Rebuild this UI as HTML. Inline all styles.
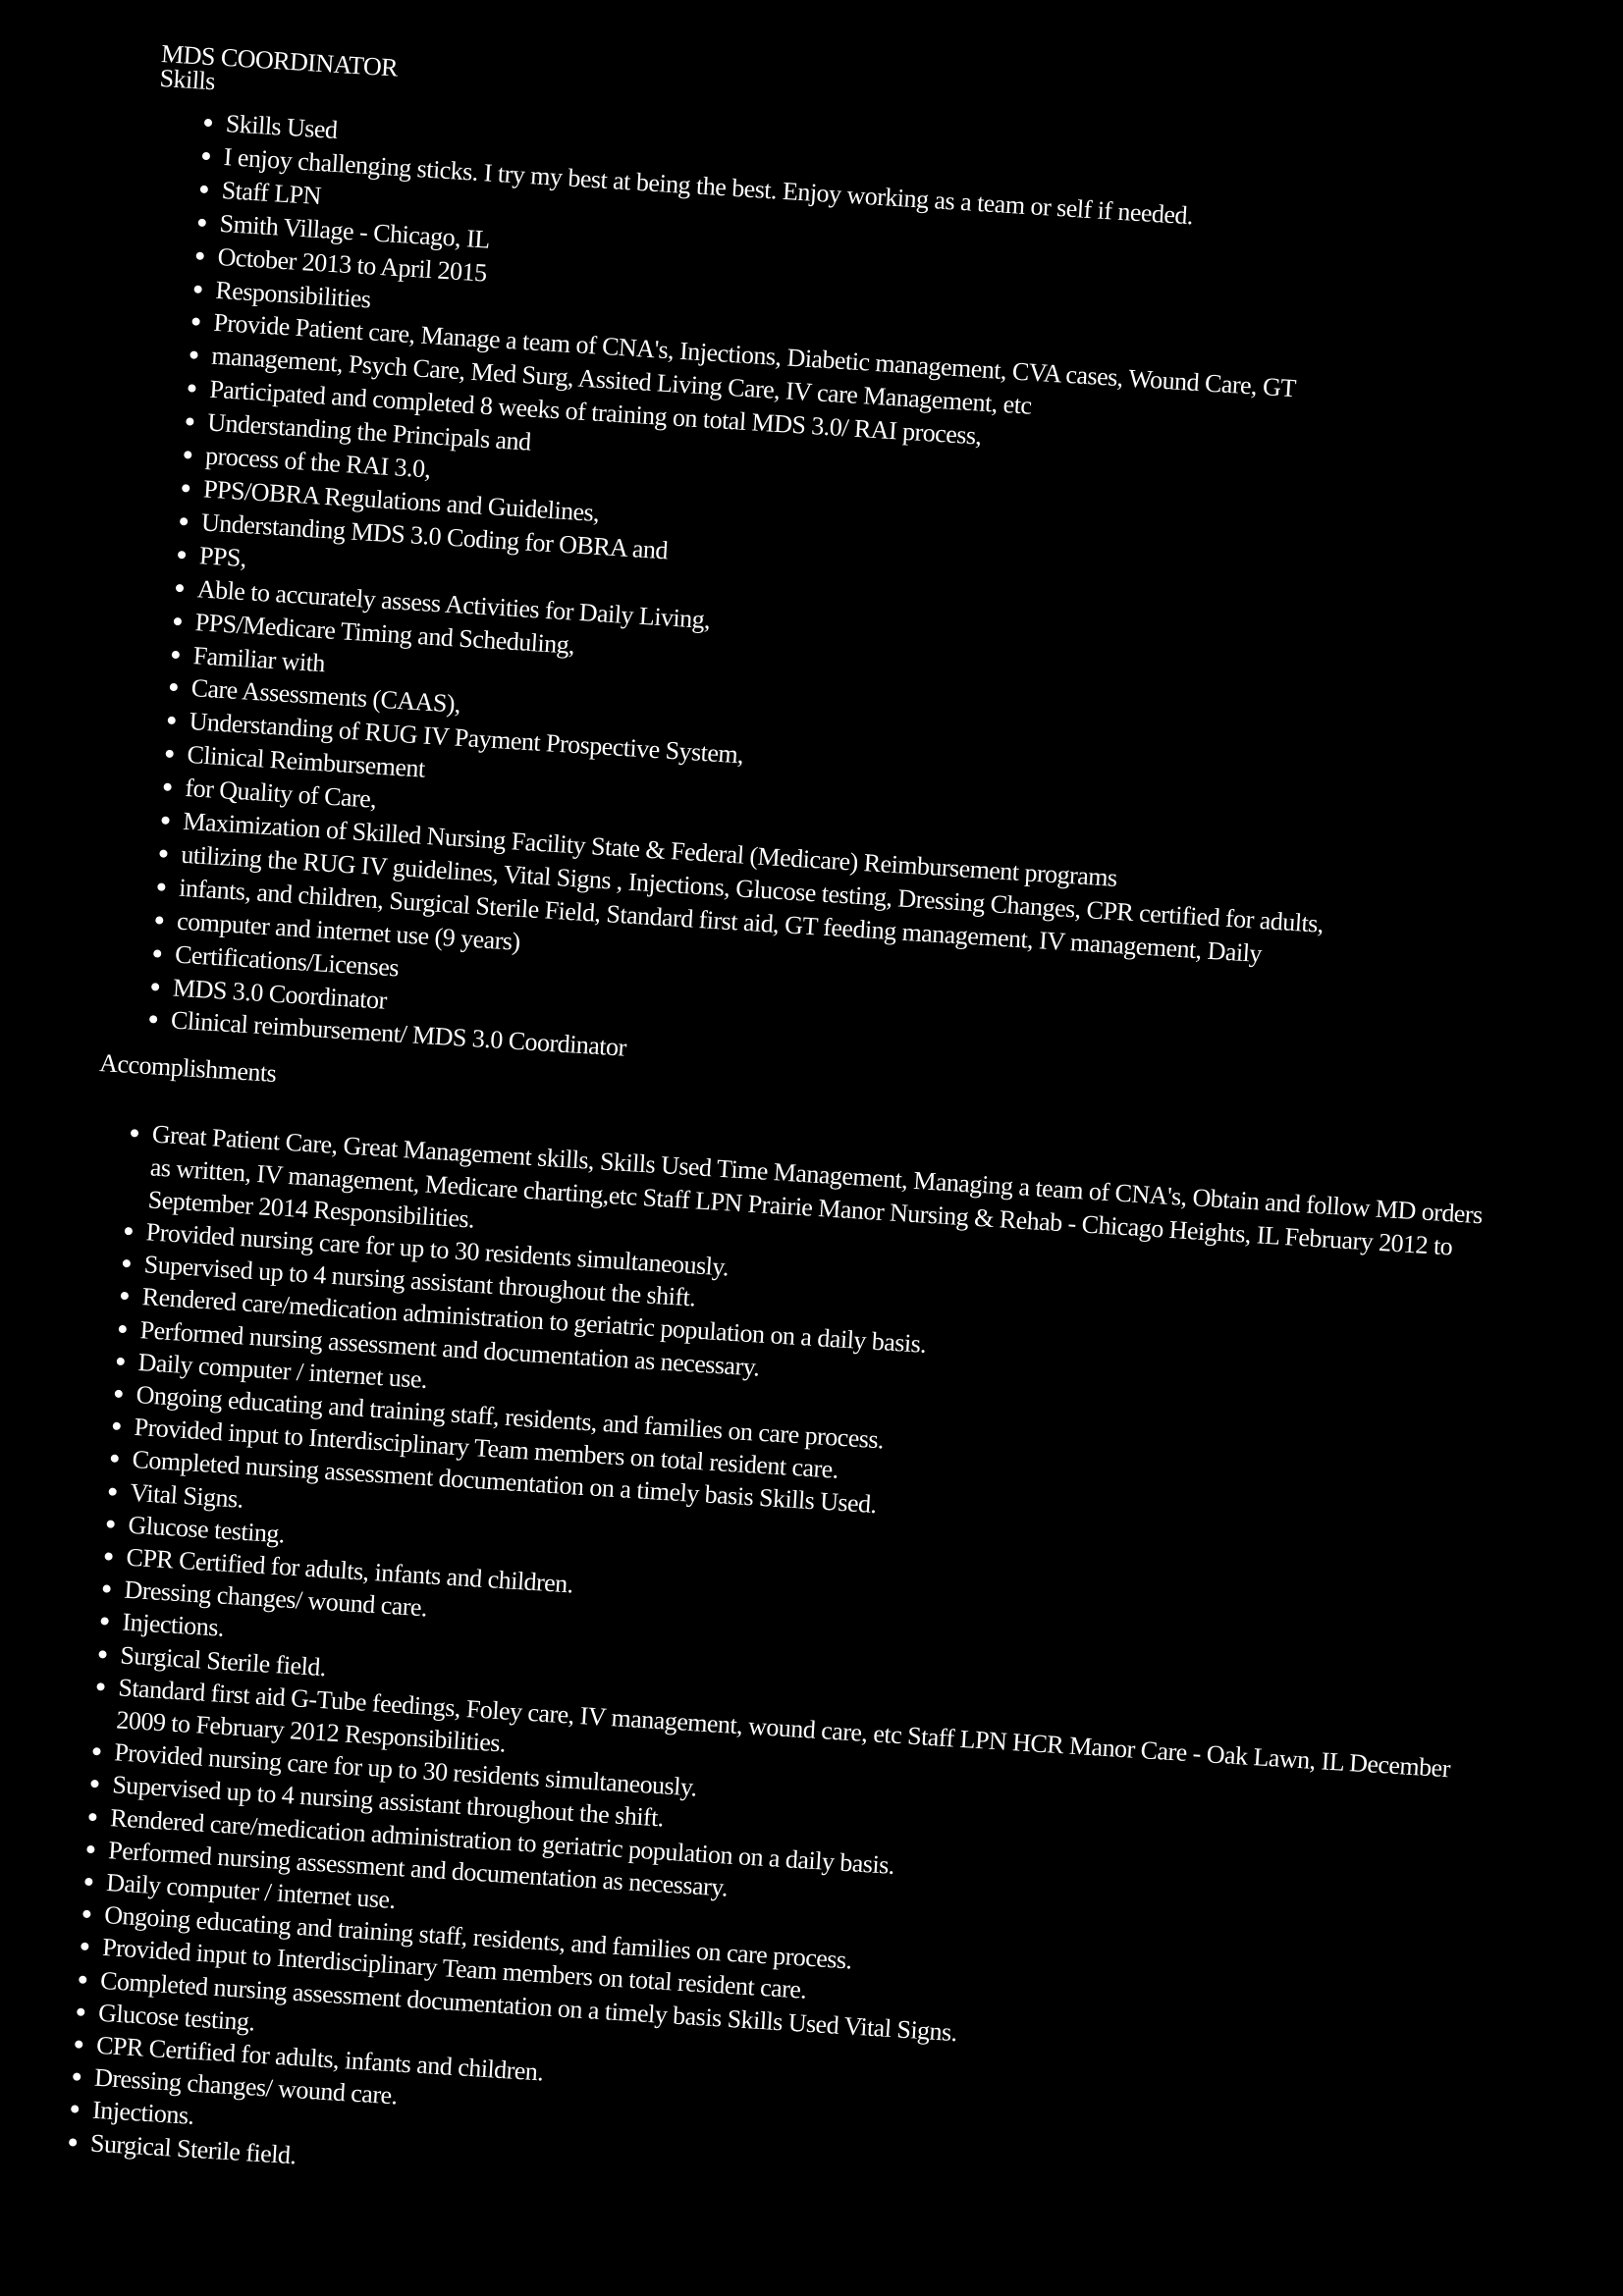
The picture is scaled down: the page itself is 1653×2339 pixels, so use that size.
<!DOCTYPE html>
<html><head><meta charset="utf-8"><style>
html,body{margin:0;padding:0;background:#000;width:1653px;height:2339px;overflow:hidden}
#c{position:absolute;left:165px;top:42px;transform:rotate(3.5deg);transform-origin:0 0;color:#fff;font-family:"Liberation Serif",serif;font-size:26px;letter-spacing:-0.5px;white-space:nowrap}
.h{line-height:25px}
ul{list-style:none;margin:0;padding:0}
li{position:relative;line-height:33.4px}
li:before{content:"";position:absolute;left:-22px;top:13px;width:8px;height:8px;border-radius:50%;background:#fff}
ul.a{margin:13px 0 0 70px}
ul.a li{line-height:33.9px}
ul.b{margin:40px 0 0 58px}
ul.b li{line-height:33.2px}
.acc{margin-top:18px;margin-left:0}
</style></head><body><div id="c">
<div class="h">MDS COORDINATOR</div>
<div class="h">Skills</div>
<ul class="a">
<li>Skills Used</li>
<li>I enjoy challenging sticks. I try my best at being the best. Enjoy working as a team or self if needed.</li>
<li>Staff LPN</li>
<li>Smith Village - Chicago, IL</li>
<li>October 2013 to April 2015</li>
<li>Responsibilities</li>
<li>Provide Patient care, Manage a team of CNA's, Injections, Diabetic management, CVA cases, Wound Care, GT</li>
<li>management, Psych Care, Med Surg, Assited Living Care, IV care Management, etc</li>
<li>Participated and completed 8 weeks of training on total MDS 3.0/ RAI process,</li>
<li>Understanding the Principals and</li>
<li>process of the RAI 3.0,</li>
<li>PPS/OBRA Regulations and Guidelines,</li>
<li>Understanding MDS 3.0 Coding for OBRA and</li>
<li>PPS,</li>
<li>Able to accurately assess Activities for Daily Living,</li>
<li>PPS/Medicare Timing and Scheduling,</li>
<li>Familiar with</li>
<li>Care Assessments (CAAS),</li>
<li>Understanding of RUG IV Payment Prospective System,</li>
<li>Clinical Reimbursement</li>
<li>for Quality of Care,</li>
<li>Maximization of Skilled Nursing Facility State &amp; Federal (Medicare) Reimbursement programs</li>
<li>utilizing the RUG IV guidelines, Vital Signs , Injections, Glucose testing, Dressing Changes, CPR certified for adults,</li>
<li>infants, and children, Surgical Sterile Field, Standard first aid, GT feeding management, IV management, Daily</li>
<li>computer and internet use (9 years)</li>
<li>Certifications/Licenses</li>
<li>MDS 3.0 Coordinator</li>
<li>Clinical reimbursement/ MDS 3.0 Coordinator</li>
</ul>
<div class="h acc">Accomplishments</div>
<ul class="b">
<li>Great Patient Care, Great Management skills, Skills Used Time Management, Managing a team of CNA's, Obtain and follow MD orders<br>as written, IV management, Medicare charting,etc Staff LPN Prairie Manor Nursing &amp; Rehab - Chicago Heights, IL February 2012 to<br>September 2014 Responsibilities.</li>
<li>Provided nursing care for up to 30 residents simultaneously.</li>
<li>Supervised up to 4 nursing assistant throughout the shift.</li>
<li>Rendered care/medication administration to geriatric population on a daily basis.</li>
<li>Performed nursing assessment and documentation as necessary.</li>
<li>Daily computer / internet use.</li>
<li>Ongoing educating and training staff, residents, and families on care process.</li>
<li>Provided input to Interdisciplinary Team members on total resident care.</li>
<li>Completed nursing assessment documentation on a timely basis Skills Used.</li>
<li>Vital Signs.</li>
<li>Glucose testing.</li>
<li>CPR Certified for adults, infants and children.</li>
<li>Dressing changes/ wound care.</li>
<li>Injections.</li>
<li>Surgical Sterile field.</li>
<li>Standard first aid G-Tube feedings, Foley care, IV management, wound care, etc Staff LPN HCR Manor Care - Oak Lawn, IL December<br>2009 to February 2012 Responsibilities.</li>
<li>Provided nursing care for up to 30 residents simultaneously.</li>
<li>Supervised up to 4 nursing assistant throughout the shift.</li>
<li>Rendered care/medication administration to geriatric population on a daily basis.</li>
<li>Performed nursing assessment and documentation as necessary.</li>
<li>Daily computer / internet use.</li>
<li>Ongoing educating and training staff, residents, and families on care process.</li>
<li>Provided input to Interdisciplinary Team members on total resident care.</li>
<li>Completed nursing assessment documentation on a timely basis Skills Used Vital Signs.</li>
<li>Glucose testing.</li>
<li>CPR Certified for adults, infants and children.</li>
<li>Dressing changes/ wound care.</li>
<li>Injections.</li>
<li>Surgical Sterile field.</li>
</ul>
</div></body></html>
